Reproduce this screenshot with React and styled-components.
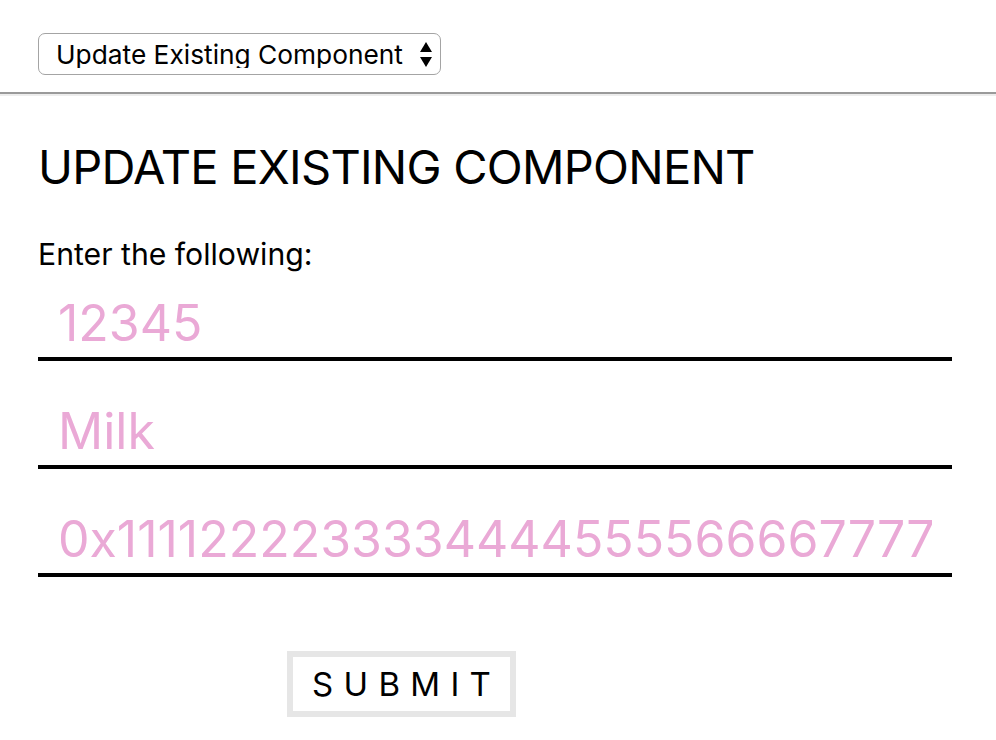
import React from "react";
import styled, { createGlobalStyle } from "styled-components";

const GlobalStyle = createGlobalStyle`
  html, body { margin: 0; padding: 0; background: #fff; }
  body { font-family: Inter, "Noto Sans", sans-serif; color: #000; }
  * { box-sizing: border-box; }
`;

const Page = styled.div`
  display: flex;
  flex-direction: column;
  width: 996px;
`;

const TopBar = styled.div`
  display: flex;
  padding: 33px 38px 17px;
`;

const SelectWrap = styled.div`
  position: relative;
  width: 403px;
  height: 42px;
`;

const Select = styled.select`
  appearance: none;
  -webkit-appearance: none;
  width: 100%;
  height: 100%;
  margin: 0;
  padding: 2px 20px 0 17px;
  border: 1.5px solid #a4a4a4;
  border-radius: 7px;
  background: #fff;
  font-family: Inter, "Noto Sans", sans-serif;
  font-size: 26.3px;
  color: #000;
  line-height: 1;
`;

const Arrows = styled.svg`
  position: absolute;
  right: 9px;
  top: 9px;
  width: 12px;
  height: 25px;
  pointer-events: none;
`;

const Divider = styled.hr`
  margin: 0;
  height: 0;
  border: 0;
  border-top: 2px solid #9a9a9a;
  border-bottom: 2px solid #ededed;
`;

const Main = styled.main`
  display: flex;
  flex-direction: column;
  align-items: flex-start;
  padding: 47px 44px 0 38px;
`;

const Title = styled.h1`
  margin: 0;
  font-size: 47px;
  letter-spacing: -0.75px;
  font-weight: 400;
  line-height: 1;
`;

const Label = styled.p`
  margin: 49px 0 24px;
  font-size: 30.2px;
  font-weight: 400;
  line-height: 1;
`;

const Fields = styled.div`
  display: flex;
  flex-direction: column;
  gap: 40px;
  width: 914px;
`;

const Field = styled.input`
  width: 100%;
  height: 68px;
  margin: 0;
  padding: 0 20px 4px 20px;
  border: 0;
  border-bottom: 4px solid #000;
  border-radius: 0;
  outline: none;
  background: transparent;
  font-family: Inter, "Noto Sans", sans-serif;
  font-size: 50px;
  color: #eaa9d6;
  &::placeholder { color: #eaa9d6; }
`;

const SubmitButton = styled.button`
  display: flex;
  justify-content: center;
  align-items: center;
  width: 229px;
  height: 66px;
  margin: 74px 0 0 249px;
  padding: 0 0 0 10.3px;
  border: 6px solid #e6e6e6;
  border-radius: 0;
  background: #fff;
  font-family: Inter, "Noto Sans", sans-serif;
  font-size: 33px;
  letter-spacing: 10.3px;
  color: #000;
  line-height: 1;
`;

export default function App() {
  return (
    <>
      <GlobalStyle />
      <Page>
        <TopBar>
          <SelectWrap>
            <Select defaultValue="update">
              <option value="create">Create New Component</option>
              <option value="update">Update Existing Component</option>
            </Select>
            <Arrows viewBox="0 0 12 25">
              <path d="M6 0 L12 10 L0 10 Z" fill="#000" />
              <path d="M0 15 L12 15 L6 25 Z" fill="#000" />
            </Arrows>
          </SelectWrap>
        </TopBar>
        <Divider />
        <Main>
          <Title>UPDATE EXISTING COMPONENT</Title>
          <Label>Enter the following:</Label>
          <Fields>
            <Field type="text" defaultValue="12345" />
            <Field type="text" defaultValue="Milk" />
            <Field type="text" defaultValue="0x1111222233334444555566667777888899990000" />
          </Fields>
          <SubmitButton type="button">SUBMIT</SubmitButton>
        </Main>
      </Page>
    </>
  );
}
